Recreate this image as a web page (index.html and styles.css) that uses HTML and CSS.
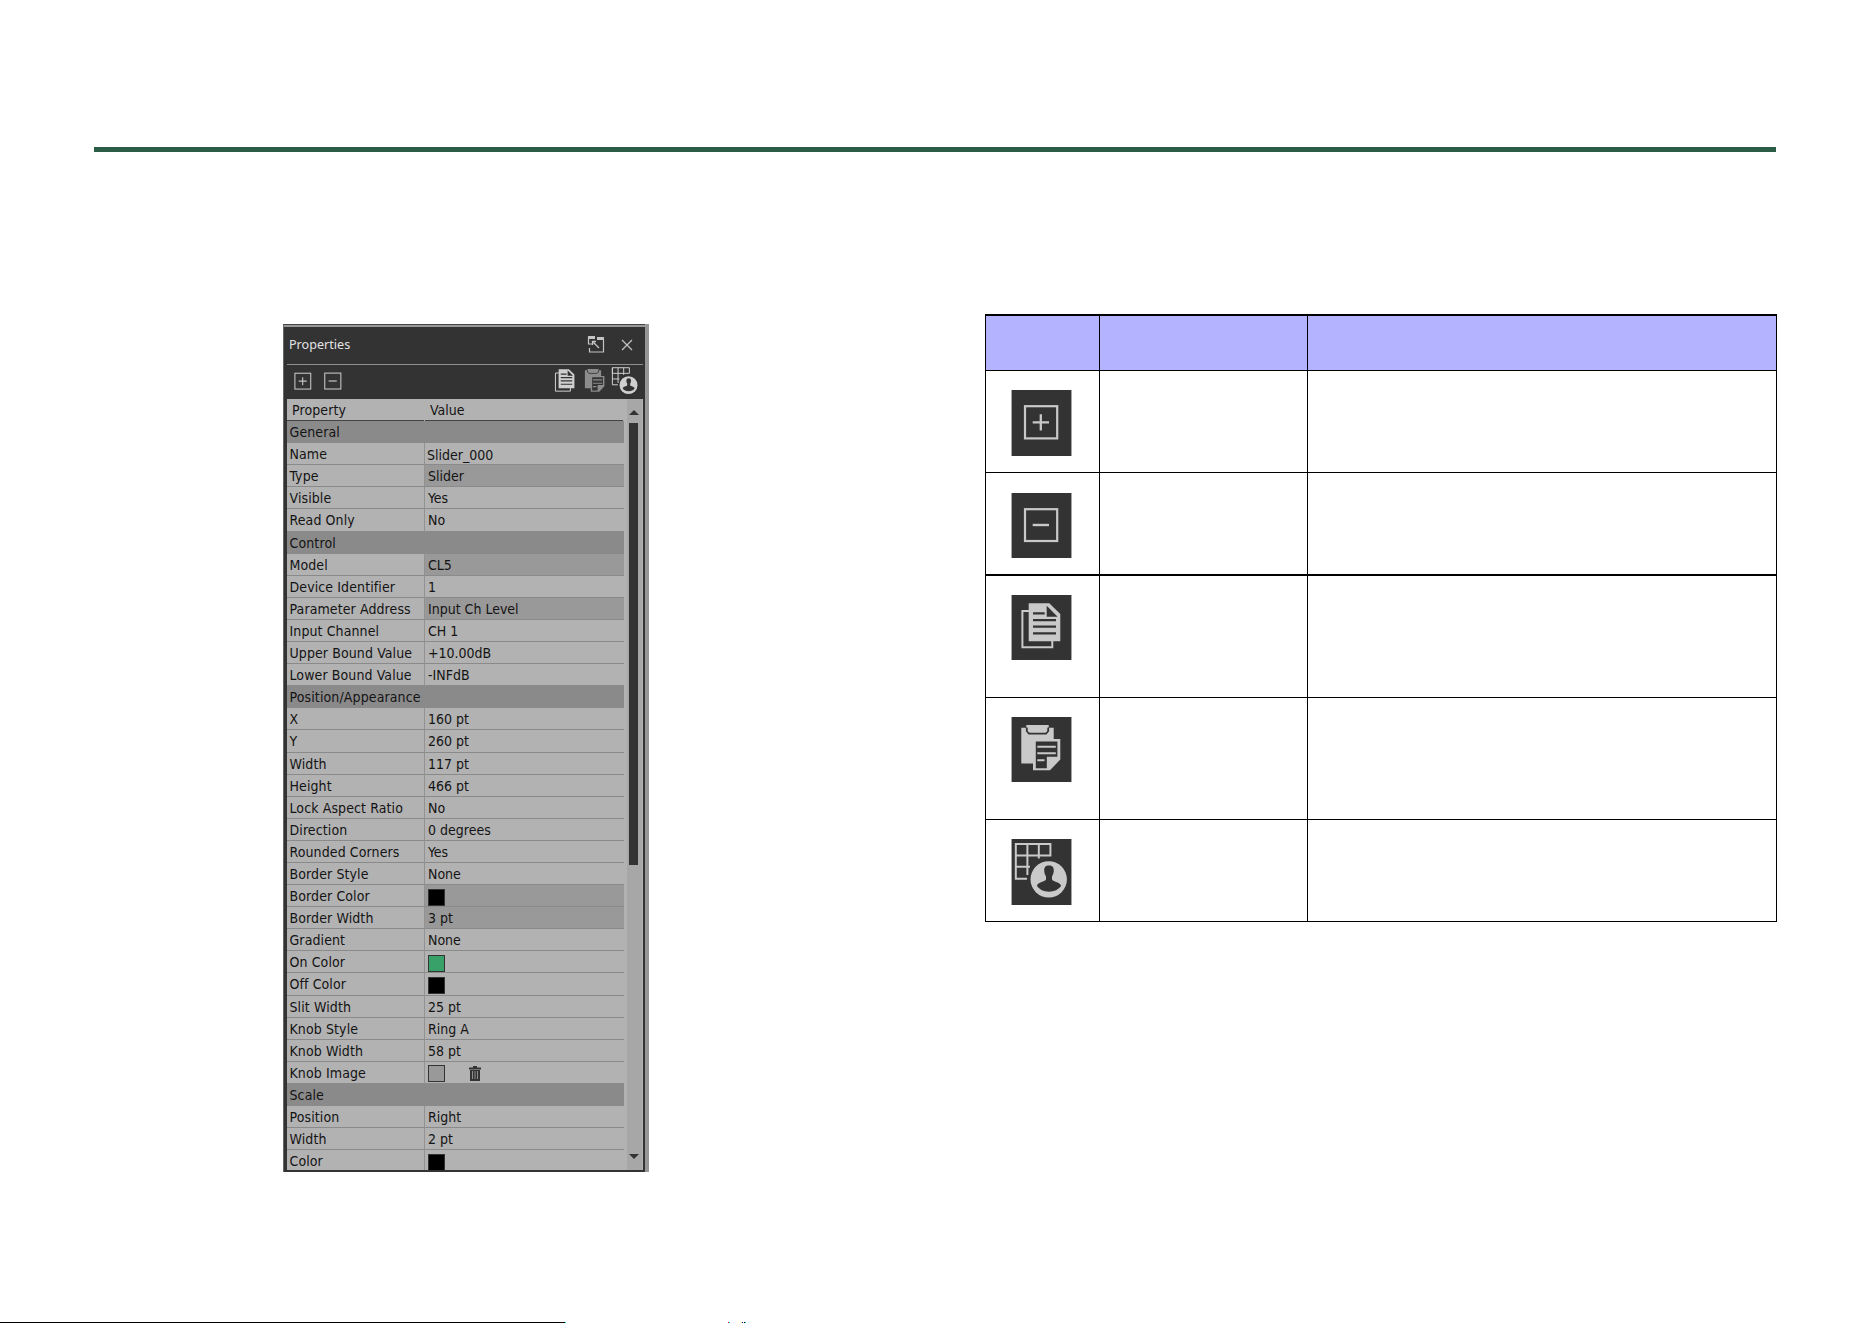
FILE: index.html
```html
<!DOCTYPE html>
<html lang="en">
<head>
  <meta charset="UTF-8" />
  <title>Properties</title>
  <link rel="stylesheet" href="styles.css">
</head>
<body>
<svg class="defs" width="0" height="0">
  <symbol id="icon-plus" viewBox="0 0 61 66">
    <rect x="14" y="16.2" width="32.2" height="32.2" fill="none" stroke="currentColor" stroke-width="2.2" />
    <path d="M21.7 32.3H38M29.8 24.2V40.5" stroke="currentColor" stroke-width="2.3" />
  </symbol>
  <symbol id="icon-minus" viewBox="0 0 61 66" preserveAspectRatio="xMidYMin slice">
    <rect x="14" y="16.2" width="32.2" height="31.8" fill="none" stroke="currentColor" stroke-width="2.2" />
    <path d="M21.7 32H38" stroke="currentColor" stroke-width="2.4" />
  </symbol>
  <symbol id="icon-copy" viewBox="0 0 61 66" preserveAspectRatio="xMidYMin slice">
    <path d="M18 16H11.4V52.3H41.3V46" fill="none" stroke="currentColor" stroke-width="2" />
    <path d="M17.7 8.3H38.3L49.3 19V46.3H17.7Z" fill="currentColor" />
    <path d="M35.7 10.7V21.7H46.6Z" fill="#333" />
    <path d="M37.6 10.7L47.4 20.3" stroke="currentColor" stroke-width="1.4" />
    <path d="M22 18.3H33.7M22 25.2H45M22 31.7H45M22 38.4H45" stroke="#333" stroke-width="2.3" />
  </symbol>
  <symbol id="icon-paste" viewBox="0 0 61 66" preserveAspectRatio="xMidYMin slice">
    <path d="M10.3 10.7H42.7V22H49.3V42.5L39 53.3H22V46.5H10.3Z" fill="currentColor" />
    <path d="M15.8 10V14L18 16.6H35L37.2 14V10" fill="none" stroke="#333" stroke-width="1.8" />
    <path d="M15.3 8H37.7V10.3L35.8 11V15H17.2V11L15.3 10.3Z" fill="currentColor" />
    <path d="M24.8 24.4H46.4V39.8H35.8V51.2H24.8Z" fill="#333" />
    <path d="M26.3 29.7H44.8M26.3 36.3H44.8M26.3 43.2H33.5" stroke="currentColor" stroke-width="2.1" />
  </symbol>
  <symbol id="icon-user" viewBox="0 0 61 66">
    <path d="M4.8 5H39.4V16.4H4.8ZM16.4 5V36M27.8 5V19.5M4.8 5V39.7H16M4.8 27.8H19" fill="none" stroke="currentColor" stroke-width="2" />
    <circle cx="37.7" cy="40.4" r="19.8" fill="#333" />
    <circle cx="37.7" cy="40.4" r="18.2" fill="currentColor" />
    <path d="M38 26.6C41.500 26.600 42.800 28.500 42.800 31.500C42.800 34 41.900 36 41 37.300V40.500C42.500 43.200 49.900 43 50 47C47.500 50.500 43.500 52.700 38 52.700C32.500 52.700 28.500 50.500 26 47C26.100 43 33.500 43.200 35 40.500V37.300C34.100 36 33.200 34 33.200 31.500C33.200 28.500 34.500 26.600 38 26.600Z" fill="#333" />
  </symbol>
</svg>

<header class="pageRule"></header>

<main class="pageContent">
  <section class="panel">
    <div class="panelFrame">
      <div class="titleBar">
        <h3>Properties</h3>
        <svg class="popout" width="18" height="18" viewBox="0 0 18 18">
          <path d="M1.5 1V8H5M2.500 12V16H16.500V3" fill="none" stroke="currentColor" stroke-width="1.200" />
          <path d="M1 1.500H8M10 2.500H17" stroke="currentColor" stroke-width="3" />
          <path d="M5 5.500H9M5.500 5V9M5.500 5.500L12 12" fill="none" stroke="currentColor" stroke-width="1.300" />
        </svg>
        <svg class="close" width="12" height="12" viewBox="0 0 12 12">
          <path d="M1 1L11 11M11 1L1 11" stroke="currentColor" stroke-width="1.200" />
        </svg>
      </div>
      <div class="toolBar">
        <svg><use href="#icon-plus" /></svg>
        <svg><use href="#icon-minus" /></svg>
        <span class="spacer"></span>
        <svg class="bright"><use href="#icon-copy" /></svg>
        <svg class="disabled"><use href="#icon-paste" /></svg>
        <svg class="bright"><use href="#icon-user" /></svg>
      </div>
      <div class="panelBody">
        <div class="properties">
          <div class="row head"><span>Property</span><span>Value</span></div>
          <div class="row section">General</div>
          <div class="row"><span>Name</span><span class="editing">Slider_000</span></div>
          <div class="row"><span>Type</span><span class="locked">Slider</span></div>
          <div class="row"><span>Visible</span><span>Yes</span></div>
          <div class="row"><span>Read Only</span><span>No</span></div>
          <div class="row section">Control</div>
          <div class="row"><span>Model</span><span class="locked">CL5</span></div>
          <div class="row"><span>Device Identifier</span><span>1</span></div>
          <div class="row"><span>Parameter Address</span><span class="locked">Input Ch Level</span></div>
          <div class="row"><span>Input Channel</span><span>CH 1</span></div>
          <div class="row"><span>Upper Bound Value</span><span>+10.00dB</span></div>
          <div class="row"><span>Lower Bound Value</span><span>-INFdB</span></div>
          <div class="row section">Position/Appearance</div>
          <div class="row"><span>X</span><span>160 pt</span></div>
          <div class="row"><span>Y</span><span>260 pt</span></div>
          <div class="row"><span>Width</span><span>117 pt</span></div>
          <div class="row"><span>Height</span><span>466 pt</span></div>
          <div class="row"><span>Lock Aspect Ratio</span><span>No</span></div>
          <div class="row"><span>Direction</span><span>0 degrees</span></div>
          <div class="row"><span>Rounded Corners</span><span>Yes</span></div>
          <div class="row"><span>Border Style</span><span>None</span></div>
          <div class="row"><span>Border Color</span><span class="locked"><i class="swatch black"></i></span></div>
          <div class="row"><span>Border Width</span><span class="locked">3 pt</span></div>
          <div class="row"><span>Gradient</span><span>None</span></div>
          <div class="row"><span>On Color</span><span><i class="swatch green"></i></span></div>
          <div class="row"><span>Off Color</span><span><i class="swatch black"></i></span></div>
          <div class="row"><span>Slit Width</span><span>25 pt</span></div>
          <div class="row"><span>Knob Style</span><span>Ring A</span></div>
          <div class="row"><span>Knob Width</span><span>58 pt</span></div>
          <div class="row">
            <span>Knob Image</span>
            <span>
              <i class="swatch gray"></i>
              <svg class="trash" width="12" height="16" viewBox="0 0 12 16">
                <path d="M0 1.500H4V0H8V1.500H12V3.500H0Z" fill="#333" />
                <path d="M1 4H11V15H1Z" fill="#333" />
                <path d="M3.500 5V13M6 5V13M8.500 5V13" stroke="#999" stroke-width=".9" />
              </svg>
            </span>
          </div>
          <div class="row section">Scale</div>
          <div class="row"><span>Position</span><span>Right</span></div>
          <div class="row"><span>Width</span><span>2 pt</span></div>
          <div class="row"><span>Color</span><span><i class="swatch black"></i></span></div>
        </div>
        <div class="scrollBar">
          <div class="arrow up"></div>
          <div class="thumb"></div>
          <div class="arrow down"></div>
        </div>
      </div>
    </div>
  </section>

  <section class="iconTable">
    <div class="tableRow tableHead"><div></div><div></div><div></div></div>
    <div class="tableRow"><div><svg class="tile"><use href="#icon-plus" /></svg></div><div></div><div></div></div>
    <div class="tableRow thick"><div><svg class="tile short"><use href="#icon-minus" /></svg></div><div></div><div></div></div>
    <div class="tableRow tall"><div><svg class="tile short"><use href="#icon-copy" /></svg></div><div></div><div></div></div>
    <div class="tableRow tall"><div><svg class="tile short"><use href="#icon-paste" /></svg></div><div></div><div></div></div>
    <div class="tableRow"><div><svg class="tile"><use href="#icon-user" /></svg></div><div></div><div></div></div>
  </section>
</main>

<footer class="pageFoot">
  <svg width="760" height="1" viewBox="0 0 760 1" shape-rendering="crispEdges">
    <path d="M0 .5H565M744 .5H745" stroke="#000" />
    <path d="M565 .5H566M729 .5H730M745 .5H746" stroke="#00e5e5" />
    <path d="M728 .5H729" stroke="#f00000" />
    <path d="M741 .5H742" stroke="#e8e070" />
    <path d="M742 .5H743" stroke="#0000a0" />
  </svg>
</footer>
</body>
</html>
```
FILE: styles.css
```css
* { margin: 0; padding: 0; box-sizing: border-box; }
html, body {
  height: 100%;
  overflow: hidden;
  background-color: #fff;
}
body {
  display: flex;
  flex-direction: column;
  font-family: "DejaVu Sans Condensed", "DejaVu Sans", Tahoma, sans-serif;
  color: #141414;
}
.defs {
  position: absolute;
}
.pageRule {
  height: 5px;
  margin: 147px 96px 0 94px;
  background-color: #2a5c46;
  flex: none;
}
.pageContent {
  display: flex;
  flex: 1;
  align-items: flex-start;
  padding: 162px 95px 0 283px;
}

/* properties panel */
.panel {
  width: 366px;
  height: 848px;
  margin-top: 10px;
  padding-right: 4px;
  background-color: #969696;
  flex: none;
}
.panelFrame {
  display: flex;
  flex-direction: column;
  height: 848px;
  padding: 0 2px 2px 3px;
  border-top: 1px solid #444;
  border-left: 1px solid #666;
  background: linear-gradient(#999, #999) 0 0 / 100% 2px no-repeat #333;
}
.titleBar {
  display: flex;
  align-items: center;
  height: 40px;
  padding: 0 10px 0 2px;
  border-bottom: 1px solid #8f8f8f;
  color: #c4c4c4;
  flex: none;
}
.titleBar h3 {
  flex: 1;
  font-family: "Noto Sans", sans-serif;
  font-size: 12.6px;
  font-weight: 400;
  color: #e2e2e2;
}
.popout {
  margin-right: 16px;
}
.toolBar {
  display: flex;
  height: 34px;
  padding: 0 3px 0 1px;
  color: #c4c4c4;
  flex: none;
}
.toolBar svg {
  width: 30px;
  height: 33px;
}
.toolBar .bright {
  color: #d0d0d0;
}
.toolBar .disabled {
  color: #8c8c8c;
}
.spacer {
  flex: 1;
}
.panelBody {
  display: flex;
  flex: 1;
  min-height: 0;
  overflow: hidden;
  background-color: #b2b2b2;
}
.properties {
  width: 337px;
  font-size: 14px;
}
.row {
  display: flex;
  height: 22.1px;
  line-height: 22.4px;
  white-space: nowrap;
}
.row span {
  width: 138px;
  padding-left: 2.5px;
  border-right: 1px solid #929292;
  border-bottom: 1px solid #8a8a8a;
  letter-spacing: .1px;
}
.row span + span {
  display: flex;
  flex: 1;
  width: auto;
  padding-left: 3px;
  border-right: none;
  letter-spacing: 0;
}
.row .locked {
  background-color: #999;
}
.row span.editing {
  padding: 1px 0 0 2px;
}
.row.section {
  padding-left: 2.5px;
  background-color: #8a8a8a;
  letter-spacing: .12px;
}
.row.head span {
  width: 137px;
  margin-right: 1px;
  padding-left: 5px;
  border-right: none;
  border-bottom-color: #444;
}
.swatch {
  width: 17px;
  height: 17px;
  margin-top: 3.6px;
  border: 1px solid #333;
  flex: none;
}
.black { background-color: #000; }
.green { background-color: #37a169; }
.gray { background-color: #999; }
.trash {
  margin: 4px 0 0 24px;
}
.scrollBar {
  display: flex;
  flex-direction: column;
  width: 15px;
  margin-left: 3px;
  padding: 11px 2px 11px;
  background-color: #a7a7a7;
}
.arrow {
  width: 0;
  height: 0;
  border-left: 5px solid transparent;
  border-right: 5px solid transparent;
}
.arrow.up { border-bottom: 5px solid #333; }
.arrow.down {
  margin-top: auto;
  border-top: 5px solid #333;
}
.thumb {
  width: 9px;
  height: 442px;
  margin-top: 8px;
  background-color: #333;
}

/* icon reference table */
.iconTable {
  width: 792px;
  margin-left: auto;
  border: solid #000;
  border-width: 2px 1px 0;
}
.tableRow {
  display: flex;
  height: 102px;
  border-bottom: 1px solid #000;
}
.tableRow > div {
  width: 208px;
  border-right: 1px solid #000;
}
.tableRow > div:first-child {
  width: 114px;
  padding: 19px 0 0 25px;
}
.tableRow > div:last-child {
  flex: 1;
  border-right: none;
}
.tableHead {
  height: 55px;
  background-color: #b3b3ff;
}
.thick {
  height: 103px;
  border-bottom-width: 2px;
}
.thick > div:first-child {
  padding-top: 20px;
}
.tall { height: 122px; }
.tile {
  display: block;
  width: 61px;
  height: 66px;
  box-shadow: inset 1px 0 #a5a5a5, inset -1px 0 #a5a5a5;
  background-color: #333;
  color: #c9c9c9;
}
.short { height: 65px; }
.pageFoot {
  display: flex;
  height: 1px;
  flex: none;
}
```
